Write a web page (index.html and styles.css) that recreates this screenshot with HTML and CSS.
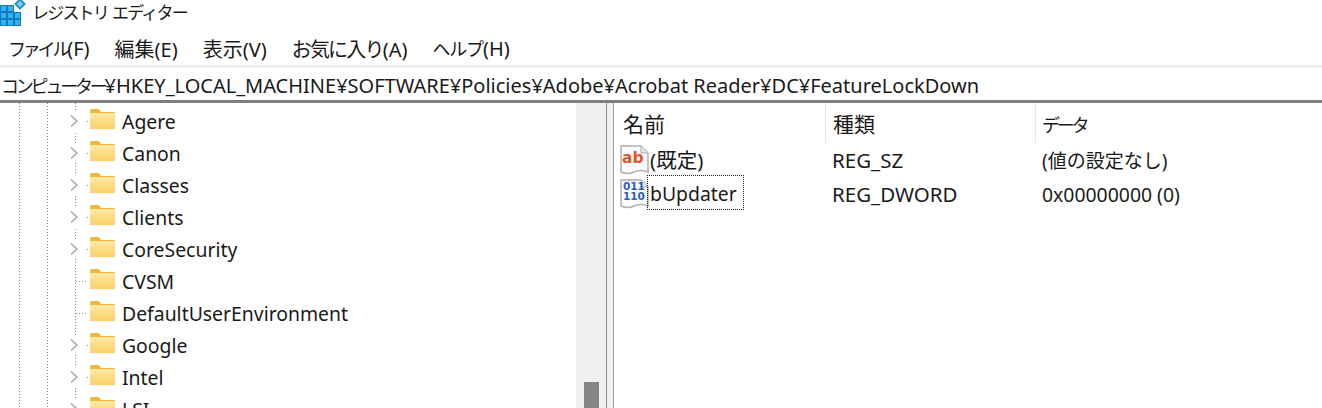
FILE: index.html
```html
<!DOCTYPE html>
<html lang="ja">
<head>
    <meta charset="UTF-8">
    <title>レジストリ エディター</title>
    <link rel="stylesheet" href="styles.css">
</head>
<body>
    <svg width="0" height="0" class="defs">
        <defs>
            <linearGradient id="folder-fill" x1="0" y1="0" x2="0" y2="1">
                <stop offset="0" stop-color="#fdeaa8"/>
                <stop offset="1" stop-color="#fbcf66"/>
            </linearGradient>
            <symbol id="folder" viewBox="0 0 25 20">
                <path d="M0 3V1.500Q0 0 1.500 0H8Q9.500 0 10 1.500L10.500 3H25V20H0Z" fill="#f2b632"/>
                <rect x="0" y="4" width="25" height="16" fill="url(#folder-fill)"/>
            </symbol>
            <symbol id="chevron" viewBox="0 0 10 14">
                <path d="M2 1.500L8 7L2 12.500" fill="none" stroke="#a6a6a6" stroke-width="1.500"/>
            </symbol>
            <symbol id="value-sheet" viewBox="0 0 30 32">
                <path d="M1 2H21L28 9V28Q20 25 14 28T1 28Z" fill="#fbfbfb" stroke="#b0b0b0" stroke-width="1.500"/>
                <path d="M21 2V9H28" fill="#e6e6e6" stroke="#b0b0b0"/>
            </symbol>
        </defs>
    </svg>

    <header class="title-bar">
        <svg class="app-icon" width="26" height="26" viewBox="0 0 26 26">
            <path d="M0 5H14V12H21V26H0Z" fill="#0c7cc0"/>
            <g fill="#34b2ee">
                <rect x="1" y="6" width="5" height="5"/><rect x="8" y="6" width="5" height="5"/>
                <rect x="1" y="13" width="5" height="5"/><rect x="8" y="13" width="5" height="5"/><rect x="15" y="13" width="5" height="5"/>
                <rect x="1" y="20" width="5" height="5"/><rect x="8" y="20" width="5" height="5"/><rect x="15" y="20" width="5" height="5"/>
            </g>
            <path d="M20 -2L26 4L20 10L14 4Z" fill="#2a93d2"/>
            <path d="M20 1L23 4L20 7L17 4Z" fill="#8fd4f5"/>
        </svg>
        <span class="title-text">レジストリ&nbsp; エディター</span>
    </header>

    <nav class="menu-bar">
        <span><span class="kana">ファイル</span>(F)</span>
        <span>編集(E)</span>
        <span>表示(V)</span>
        <span><span class="favs">お気に入り</span>(A)</span>
        <span><span class="help">ヘルプ</span>(H)</span>
    </nav>

    <div class="address-bar"><span class="kana">コンピューター</span>¥HKEY_LOCAL_MACHINE¥SOFTWARE¥Policies¥Adobe¥Acrobat Reader¥DC¥FeatureLockDown</div>

    <main class="panes">
        <section class="tree-pane">
            <ul class="tree">
                <li class="node"><svg class="chevron"><use href="#chevron"/></svg><svg class="folder"><use href="#folder"/></svg><span>Agere</span></li>
                <li class="node"><svg class="chevron"><use href="#chevron"/></svg><svg class="folder"><use href="#folder"/></svg><span>Canon</span></li>
                <li class="node"><svg class="chevron"><use href="#chevron"/></svg><svg class="folder"><use href="#folder"/></svg><span>Classes</span></li>
                <li class="node"><svg class="chevron"><use href="#chevron"/></svg><svg class="folder"><use href="#folder"/></svg><span>Clients</span></li>
                <li class="node"><svg class="chevron"><use href="#chevron"/></svg><svg class="folder"><use href="#folder"/></svg><span>CoreSecurity</span></li>
                <li class="node leaf"><i class="stub"></i><svg class="folder"><use href="#folder"/></svg><span>CVSM</span></li>
                <li class="node leaf"><i class="stub"></i><svg class="folder"><use href="#folder"/></svg><span>DefaultUserEnvironment</span></li>
                <li class="node"><svg class="chevron"><use href="#chevron"/></svg><svg class="folder"><use href="#folder"/></svg><span>Google</span></li>
                <li class="node"><svg class="chevron"><use href="#chevron"/></svg><svg class="folder"><use href="#folder"/></svg><span>Intel</span></li>
                <li class="node"><svg class="chevron"><use href="#chevron"/></svg><svg class="folder"><use href="#folder"/></svg><span>LSI</span></li>
            </ul>
            <div class="scrollbar"><div class="thumb"></div></div>
        </section>

        <div class="splitter"></div>

        <section class="list-pane">
            <div class="row head">
                <div class="col-name">名前</div>
                <div class="col-type">種類</div>
                <div class="col-data"><span class="kana">データ</span></div>
            </div>
            <div class="row value">
                <div class="col-name">
                    <svg class="reg-icon"><use href="#value-sheet"/><text x="2" y="19" class="ab">ab</text></svg>
                    <span class="default-name">(既定)</span>
                </div>
                <div class="col-type">REG_SZ</div>
                <div class="col-data unset">(値の設定なし)</div>
            </div>
            <div class="row value">
                <div class="col-name">
                    <svg class="reg-icon"><use href="#value-sheet"/><text x="3" y="12" class="bin">011</text><text x="3" y="22" class="bin">110</text></svg>
                    <span class="selected">bUpdater</span>
                </div>
                <div class="col-type">REG_DWORD</div>
                <div class="col-data">0x00000000 (0)</div>
            </div>
        </section>
    </main>
</body>
</html>
```

FILE: styles.css
```css
html, body {
    margin: 0;
    padding: 0;
    height: 408px;
    overflow: hidden;
    background: white;
}

body {
    font-family: "Noto Sans", "Noto Sans CJK JP", sans-serif;
    font-size: 19.4px;
    color: #1a1a1a;
    display: flex;
    flex-direction: column;
}

.defs {
    position: absolute;
}

/* narrow kana, the CJK font is wider than the original one */
.kana {
    font-size: 18px;
    letter-spacing: -3.2px;
}

.favs {
    letter-spacing: -1.800px;
}

.help {
    font-size: 18px;
    letter-spacing: -1.200px;
}

/* top bars */
.title-bar {
    height: 28px;
    flex: none;
    display: flex;
    align-items: flex-start;
    overflow: hidden;
}

.app-icon {
    flex: none;
}

.title-text {
    margin-left: 6px;
    font-size: 17px;
    letter-spacing: -1.800px;
    line-height: 24px;
    font-family: "Noto Sans CJK JP", sans-serif;
}

.menu-bar {
    height: 40px;
    flex: none;
    display: flex;
    gap: 25px;
    align-items: center;
    padding: 6px 0 3px 8px;
    box-sizing: border-box;
    font-size: 20px;
    border-bottom: 3px solid #efefef;
}

.address-bar {
    height: 35px;
    flex: none;
    line-height: 36px;
    font-size: 20px;
    padding-left: 1px;
    box-sizing: border-box;
    white-space: nowrap;
    border-bottom: 3px solid #7f7f7f;
}

/* panes */
.panes {
    flex: 1;
    display: flex;
    min-height: 0;
}

.tree-pane {
    width: 606px;
    flex: none;
    display: flex;
    overflow: hidden;
    background-image:
        repeating-linear-gradient(to bottom, #8c8c8c 0 1px, transparent 1px 3px),
        repeating-linear-gradient(to bottom, #8c8c8c 0 1px, transparent 1px 3px),
        repeating-linear-gradient(to bottom, #8c8c8c 0 1px, transparent 1px 3px);
    background-size: 1px 100%;
    background-position: 19px 0, 47px 0, 75px 0;
    background-repeat: no-repeat;
}

.tree {
    list-style: none;
    margin: 0;
    padding: 2px 0 0 69px;
    flex: 1;
}

.node {
    height: 32px;
    display: flex;
    align-items: center;
    white-space: nowrap;
    background: linear-gradient(#8c8c8c, #8c8c8c) no-repeat 18px 50% / 1px 1px;
}

.node.leaf {
    background: none;
}

.chevron {
    width: 10px;
    height: 14px;
    flex: none;
    background: white;
    outline: 3px solid white;
}

.stub {
    width: 10px;
    height: 1px;
    flex: none;
    background-image: repeating-linear-gradient(to right, #8c8c8c 0 1px, transparent 1px 3px);
    margin-left: 7px;
    margin-right: -7px;
}

.folder {
    width: 25px;
    height: 20px;
    flex: none;
    margin: -4px 7px 0 11px;
}

.scrollbar {
    width: 30px;
    flex: none;
    background: #f0f0f0;
    display: flex;
    flex-direction: column;
    justify-content: flex-end;
    align-items: center;
}

.thumb {
    width: 15px;
    height: 26px;
    background: #858585;
}

.splitter {
    width: 8px;
    flex: none;
    box-sizing: border-box;
    background: #f0f0f0;
    border-left: 1px solid #8f8f8f;
    border-right: 1px solid #a0a0a0;
}

.list-pane {
    flex: 1;
}

.row {
    display: flex;
    align-items: center;
}

.head {
    height: 40px;
    align-items: stretch;
    font-size: 21px;
    line-height: 42px;
}

.value {
    height: 34px;
}

.col-name {
    width: 211px;
    flex: none;
    display: flex;
    padding-left: 9px;
    box-sizing: border-box;
}

.col-type {
    width: 210px;
    flex: none;
    padding-left: 7px;
    box-sizing: border-box;
    font-size: 20.500px;
}

.col-data {
    padding-left: 7px;
}

.head .col-type, .head .col-data {
    font-size: 21px;
    border-left: 1px solid #e5e5e5;
}

.head .col-data {
    padding-left: 6px;
}

.value .col-name {
    padding-left: 6px;
    align-items: center;
}

.unset {
    font-size: 19px;
}

.default-name {
    font-size: 20.500px;
    margin-top: -2px;
}

.reg-icon {
    width: 30px;
    height: 32px;
    flex: none;
}

.ab {
    font: bold 15.500px "DejaVu Sans", sans-serif;
    fill: #e0552f;
}

.bin {
    font: bold 10.500px "DejaVu Sans", sans-serif;
    fill: #2f5fb8;
}

.selected {
    outline: 1px dotted #222;
    margin: -3px 0 0 -2px;
    padding: 3px 6px 0 2px;
    line-height: 30px;
}
```
